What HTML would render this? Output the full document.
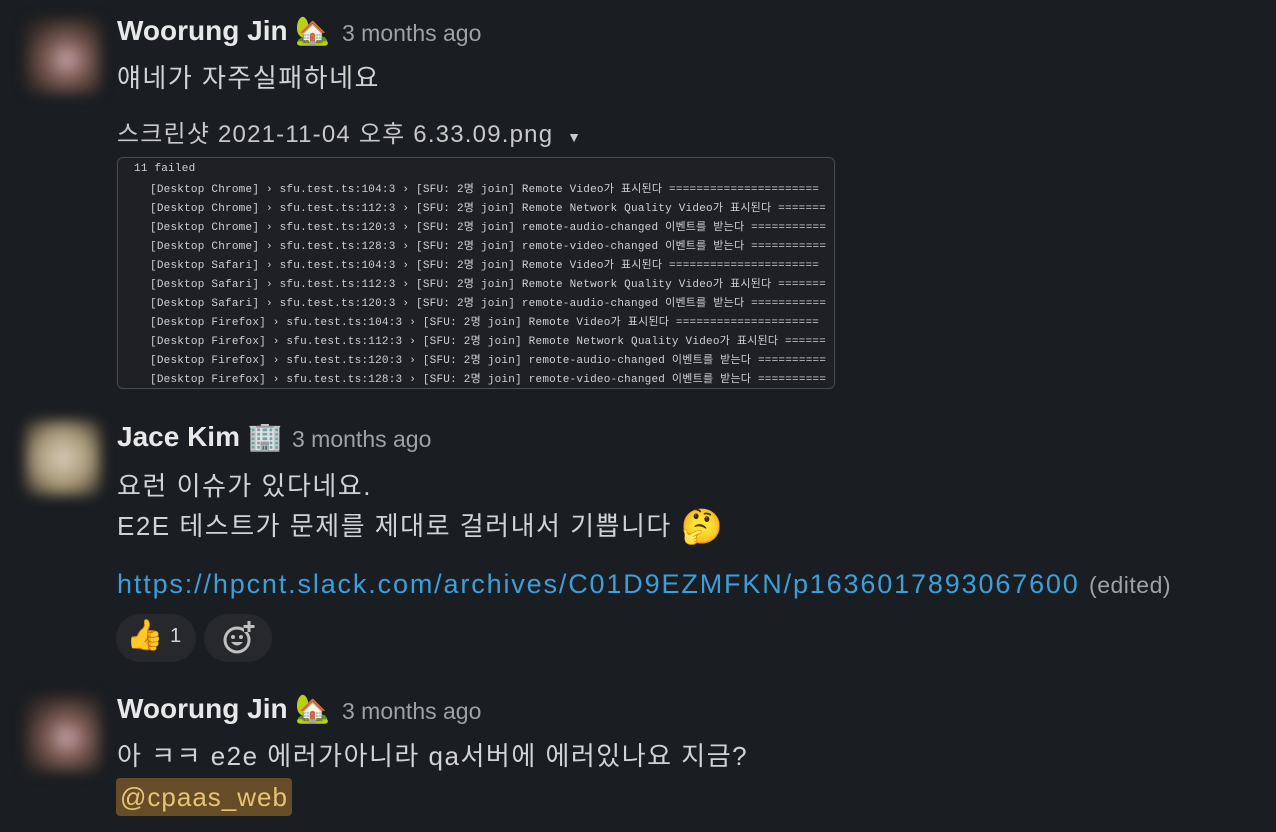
<!DOCTYPE html>
<html><head><meta charset="utf-8"><style>
body{margin:0;width:1276px;height:832px;background:#1a1d21;overflow:hidden;font-family:"Liberation Sans","Noto Sans CJK KR",sans-serif;color:#d1d2d3;position:relative}
.a{position:absolute;white-space:nowrap}
.name{font-weight:bold;font-size:28px;color:#e8e8e8}
.time{font-size:23px;color:#a0a1a3}
.body{font-size:26px;letter-spacing:1.5px}
.av{position:absolute;width:76px;height:76px;filter:blur(6px);border-radius:10px}
.code{position:absolute;left:117px;top:157px;width:716px;height:230px;border:1px solid #4a4c50;border-radius:6px;background:#1e2024;font-family:"Liberation Mono","Noto Sans CJK KR",monospace;font-size:11px;color:#d0d0d0;letter-spacing:0.22px;overflow:hidden}
.code div{position:absolute;left:32px;white-space:nowrap}
.pill{position:absolute;height:48px;border-radius:24px;background:#26282c}
</style></head><body>
<div class="av" style="left:25px;top:18px;background:radial-gradient(circle at 55% 55%,#c9a6ac 0,#7a5a50 35%,#3a2e2a 70%,#1a1d21 100%)"></div>
<div class="a name" style="left:117px;top:14px">Woorung Jin <span style="font-size:28px">🏡</span></div>
<div class="a time" style="left:342px;top:20px">3 months ago</div>
<div class="a body" style="left:117px;top:58px">얘네가 자주실패하네요</div>
<div class="a" style="left:117px;top:114px;font-size:24px;color:#c8c8c8;letter-spacing:1.2px">스크린샷 2021-11-04 오후 6.33.09.png <span style="font-size:14px;margin-left:6px">▼</span></div>
<div class="code">
<div style="left:16px;top:5px">11 failed</div>
<div style="top:22px">[Desktop Chrome] › sfu.test.ts:104:3 › [SFU: 2명 join] Remote Video가 표시된다 ======================</div>
<div style="top:41px">[Desktop Chrome] › sfu.test.ts:112:3 › [SFU: 2명 join] Remote Network Quality Video가 표시된다 =======</div>
<div style="top:60px">[Desktop Chrome] › sfu.test.ts:120:3 › [SFU: 2명 join] remote-audio-changed 이벤트를 받는다 ===========</div>
<div style="top:79px">[Desktop Chrome] › sfu.test.ts:128:3 › [SFU: 2명 join] remote-video-changed 이벤트를 받는다 ===========</div>
<div style="top:98px">[Desktop Safari] › sfu.test.ts:104:3 › [SFU: 2명 join] Remote Video가 표시된다 ======================</div>
<div style="top:117px">[Desktop Safari] › sfu.test.ts:112:3 › [SFU: 2명 join] Remote Network Quality Video가 표시된다 =======</div>
<div style="top:136px">[Desktop Safari] › sfu.test.ts:120:3 › [SFU: 2명 join] remote-audio-changed 이벤트를 받는다 ===========</div>
<div style="top:155px">[Desktop Firefox] › sfu.test.ts:104:3 › [SFU: 2명 join] Remote Video가 표시된다 =====================</div>
<div style="top:174px">[Desktop Firefox] › sfu.test.ts:112:3 › [SFU: 2명 join] Remote Network Quality Video가 표시된다 ======</div>
<div style="top:193px">[Desktop Firefox] › sfu.test.ts:120:3 › [SFU: 2명 join] remote-audio-changed 이벤트를 받는다 ==========</div>
<div style="top:212px">[Desktop Firefox] › sfu.test.ts:128:3 › [SFU: 2명 join] remote-video-changed 이벤트를 받는다 ==========</div>
</div>
<div class="av" style="left:25px;top:420px;background:radial-gradient(circle at 50% 50%,#d8cdb8 0,#a89878 50%,#5a5040 80%,#1a1d21 100%)"></div>
<div class="a name" style="left:117px;top:420px">Jace Kim <span style="font-size:28px">🏢</span></div>
<div class="a time" style="left:292px;top:426px">3 months ago</div>
<div class="a body" style="left:117px;top:466px">요런 이슈가 있다네요.</div>
<div class="a body" style="left:117px;top:506px">E2E 테스트가 문제를 제대로 걸러내서 기쁩니다 <span style="font-size:34px;vertical-align:-3px">🤔</span></div>
<div class="a" style="left:117px;top:569px;color:#3d9fd9;font-size:27px;letter-spacing:1.85px">https://hpcnt.slack.com/archives/C01D9EZMFKN/p1636017893067600 <span style="color:#a0a1a3;font-size:23px;letter-spacing:0.5px">(edited)</span></div>
<div class="pill" style="left:116px;top:614px;width:80px"></div>
<div class="a" style="left:126px;top:618px;font-size:30px">👍</div>
<div class="a" style="left:170px;top:625px;font-size:20px">1</div>
<div class="pill" style="left:204px;top:614px;width:68px"></div>
<svg class="a" style="left:220px;top:620px" width="40" height="36" viewBox="0 0 40 36"><circle cx="17" cy="20" r="12" fill="none" stroke="#c0c0c0" stroke-width="3"/><circle cx="13" cy="17" r="2" fill="#c0c0c0"/><circle cx="21" cy="17" r="2" fill="#c0c0c0"/><path d="M11 22 Q17 29 23 22Z" fill="#c0c0c0"/><rect x="24" y="2" width="10" height="10" fill="#26282c"/><path d="M29 1v11M23.5 6.5h11" stroke="#c0c0c0" stroke-width="3"/></svg>
<div class="av" style="left:25px;top:696px;background:radial-gradient(circle at 55% 55%,#c9a6ac 0,#7a5a50 35%,#3a2e2a 70%,#1a1d21 100%)"></div>
<div class="a name" style="left:117px;top:692px">Woorung Jin <span style="font-size:28px">🏡</span></div>
<div class="a time" style="left:342px;top:698px">3 months ago</div>
<div class="a body" style="left:117px;top:736px">아 ㅋㅋ e2e 에러가아니라 qa서버에 에러있나요 지금?</div>
<div class="a body" style="left:116px;top:778px;background:#664d27;color:#e8c374;border-radius:4px;padding:2px 4px;height:34px;line-height:34px;letter-spacing:1px">@cpaas_web</div>
</body></html>
